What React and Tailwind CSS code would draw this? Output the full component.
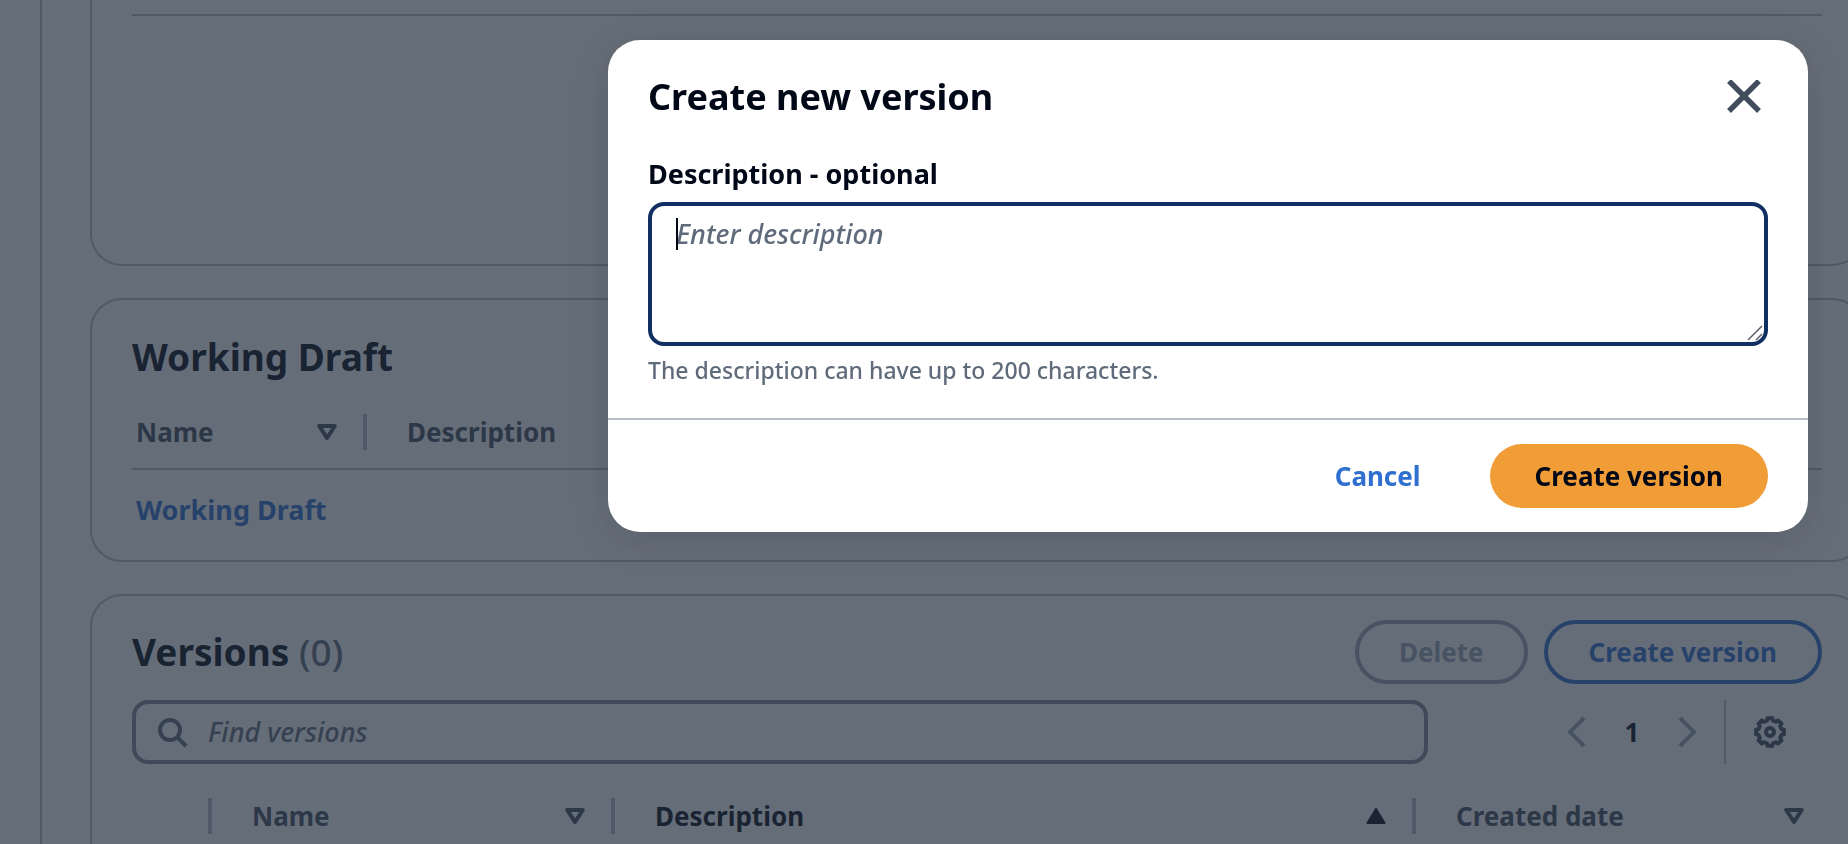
import React from "react";

const GEAR_POINTS = Array.from({ length: 8 }, (_, tooth) =>
  [
    [-15, 11.8],
    [-9, 14],
    [9, 14],
    [15, 11.8],
  ].map(([offset, radius]) => {
    const angle = ((tooth * 45 + offset) * Math.PI) / 180;
    return `${(16 + radius * Math.sin(angle)).toFixed(2)},${(16 - radius * Math.cos(angle)).toFixed(2)}`;
  })
)
  .flat()
  .join(" ");

function SortDown() {
  return (
    <svg className="h-4 w-5 shrink-0" viewBox="0 0 20 16" fill="none" stroke="currentColor" strokeWidth="4" strokeLinejoin="round" aria-hidden="true">
      <path d="M2.2 2h15.6L10 14z" />
    </svg>
  );
}

function SortUp() {
  return (
    <svg className="h-4 w-5 shrink-0" viewBox="0 0 20 16" fill="currentColor" stroke="currentColor" strokeWidth="2" strokeLinejoin="round" aria-hidden="true">
      <path d="M1.500 15h17L10 1z" />
    </svg>
  );
}

function HeaderCell({ children, icon, className = "", last = false }) {
  return (
    <div className={`flex h-9 items-center justify-between ${last ? "pr-[18px]" : "border-r-4 border-[#b6bec9] pr-[26px]"} ${className}`}>
      <span>{children}</span>
      {icon}
    </div>
  );
}

function WorkingDraft() {
  return (
    <section className="rounded-[32px] border-2 border-[#b6bec9] px-10 pt-[35px]">
      <h2 className="text-[37px] leading-[44px] font-bold text-[#000716]">Working Draft</h2>
      <table className="mt-[17px] w-full table-fixed border-separate border-spacing-0 text-left">
        <thead className="text-[#414d5c]">
          <tr>
            <th className="w-[235px] border-b-2 border-[#b6bec9] p-0 pt-[18px] pb-[18px]">
              <HeaderCell className="pl-1" icon={<SortDown />}>Name</HeaderCell>
            </th>
            <th className="border-b-2 border-[#b6bec9] p-0 pt-[18px] pb-[18px]">
              <HeaderCell className="pl-10" last>Description</HeaderCell>
            </th>
          </tr>
        </thead>
        <tbody>
          <tr>
            <td className="p-0 pt-5 pb-[30px] pl-1 text-[27px] leading-[40px]">
              <a href="#working-draft" className="font-bold text-[#2f6fd0]">Working Draft</a>
            </td>
            <td />
          </tr>
        </tbody>
      </table>
    </section>
  );
}

function Versions() {
  return (
    <section className="flex-1 rounded-t-[32px] border-2 border-b-0 border-[#b6bec9] px-10 pt-6">
      <div className="flex items-center justify-between">
        <h2 className="text-[37px] leading-[44px] font-bold text-[#000716]">
          Versions <span className="font-medium text-[#5f6b7a]">(0)</span>
        </h2>
        <div className="flex gap-4">
          <button type="button" disabled className="h-16 rounded-full border-4 border-[#9ba7b6] px-10 font-bold text-[#9ba7b6]">Delete</button>
          <button type="button" className="h-16 rounded-full border-4 border-[#2f6fd0] px-[41px] font-bold text-[#2f6fd0]">Create version</button>
        </div>
      </div>
      <div className="mt-4 flex items-center justify-between">
        <label className="flex h-16 w-[1296px] items-center gap-5 rounded-2xl border-4 border-[#7d8998] px-5">
          <svg className="h-8 w-8 shrink-0 text-[#5f6b7a]" viewBox="0 0 32 32" fill="none" stroke="currentColor" strokeWidth="4" aria-hidden="true">
            <circle cx="14" cy="14" r="10" />
            <path d="M21 21l9 9" />
          </svg>
          <input type="search" aria-label="Find versions" placeholder="Find versions" className="min-w-0 flex-1 bg-transparent text-[27px] font-medium italic outline-none placeholder:text-[#5f6b7a]" />
        </label>
        <div className="flex items-center pr-9">
          <button type="button" aria-label="Previous page" className="text-[#9ba7b6]">
            <svg className="h-8 w-5" viewBox="0 0 20 32" fill="none" stroke="currentColor" strokeWidth="4" aria-hidden="true"><path d="M18 2L4 16l14 14" /></svg>
          </button>
          <button type="button" aria-label="Page 1" className="w-[92px] text-center font-bold text-[#000716]">1</button>
          <button type="button" aria-label="Next page" className="text-[#9ba7b6]">
            <svg className="h-8 w-5" viewBox="0 0 20 32" fill="none" stroke="currentColor" strokeWidth="4" aria-hidden="true"><path d="M2 2l14 14L2 30" /></svg>
          </button>
          <div className="ml-[26px] flex h-16 items-center border-l-2 border-[#b6bec9] pl-7">
            <button type="button" aria-label="Preferences" className="text-[#414d5c]">
              <svg className="h-8 w-8" viewBox="0 0 32 32" fill="none" stroke="currentColor" strokeWidth="4" aria-hidden="true">
                <polygon points={GEAR_POINTS} />
                <circle cx="16" cy="16" r="4" />
              </svg>
            </button>
          </div>
        </div>
      </div>
      <table className="mt-4 w-full table-fixed border-separate border-spacing-0 text-left text-[#414d5c]">
        <thead>
          <tr>
            <th className="w-20 p-0 pt-[18px] pb-[18px]"><HeaderCell /></th>
            <th className="w-[403px] p-0 pt-[18px] pb-[18px]"><HeaderCell className="pl-10" icon={<SortDown />}>Name</HeaderCell></th>
            <th className="p-0 pt-[18px] pb-[18px] text-[#000716]"><HeaderCell className="pl-10" icon={<SortUp />}>Description</HeaderCell></th>
            <th className="w-[406px] p-0 pt-[18px] pb-[18px]"><HeaderCell className="pl-10" icon={<SortDown />} last>Created date</HeaderCell></th>
          </tr>
        </thead>
      </table>
    </section>
  );
}

function CreateVersionDialog() {
  return (
    <div className="fixed inset-0 flex items-start justify-end bg-[#232f3e]/70 p-10">
      <div role="dialog" aria-modal="true" aria-labelledby="dialog-title" className="w-[1200px] max-w-full rounded-[32px] bg-white shadow-[0_8px_40px_rgba(0,7,22,0.12)]">
        <div className="px-10 pt-[35px] pb-8">
          <div className="flex h-[44px] items-center justify-between">
            <h1 id="dialog-title" className="text-[36px] leading-[44px] font-bold">Create new version</h1>
            <button type="button" aria-label="Close" className="flex w-12 justify-center text-[#414d5c]">
              <svg className="h-[34px] w-[34px]" viewBox="0 0 34 34" fill="none" stroke="currentColor" strokeWidth="5.500" aria-hidden="true"><path d="M2 1l30 30M32 1L2 31" /></svg>
            </button>
          </div>
          <label htmlFor="description" className="mt-[35px] block text-[27px] leading-[40px] font-bold">Description - optional</label>
          <div className="relative mt-2">
            <textarea id="description" aria-describedby="description-hint" placeholder="Enter description" className="block h-36 w-full resize-none rounded-2xl border-4 border-[#112f60] px-6 py-2 text-[27px] leading-[40px] font-medium italic outline-none placeholder:text-[#5f6b7a]" />
            <span className="absolute top-4 left-7 h-8 w-0.5 bg-[#000716]" aria-hidden="true" />
            <svg className="absolute right-[5px] bottom-[5px] h-4 w-4" viewBox="0 0 16 16" fill="none" stroke="#5c6066" strokeWidth="1.500" aria-hidden="true"><path d="M1 15L15 1M9 15l6-6" /></svg>
          </div>
          <p id="description-hint" className="mt-2 text-[23px] leading-[32px] font-medium text-[#5f6b7a]">The description can have up to 200 characters.</p>
        </div>
        <div className="flex justify-end gap-6 border-t-2 border-[#b6bec9] px-10 py-6">
          <button type="button" className="h-16 rounded-full px-[45px] font-bold text-[#2f6fd0]">Cancel</button>
          <button type="button" className="h-16 rounded-full bg-[#f09d38] px-[45px] font-bold">Create version</button>
        </div>
      </div>
    </div>
  );
}

export default function App() {
  return (
    <div className="h-screen overflow-hidden bg-white font-['Noto_Sans',sans-serif] text-[26px] leading-[36px] text-[#000716]">
      <div className="flex h-full">
        <aside className="w-[42px] shrink-0 border-r-2 border-[#b6bec9]" />
        <main className="-mr-4 ml-12 flex min-w-0 flex-1 flex-col gap-8">
          <section className="rounded-b-[32px] border-2 border-t-0 border-[#b6bec9] px-10 pt-[14px] pb-[248px]">
            <hr className="border-t-2 border-[#b6bec9]" />
          </section>
          <WorkingDraft />
          <Versions />
        </main>
      </div>
      <CreateVersionDialog />
    </div>
  );
}
